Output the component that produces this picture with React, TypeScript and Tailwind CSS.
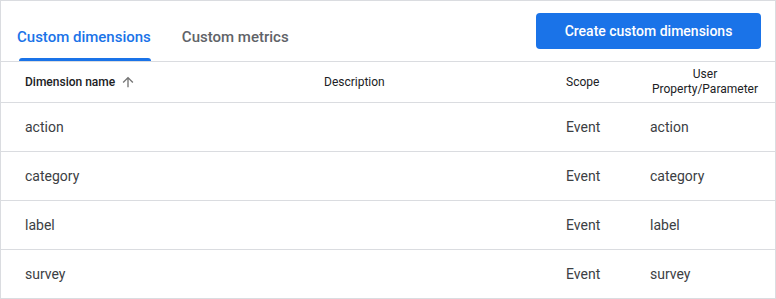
const rows = [
  { name: "action", scope: "Event", param: "action" },
  { name: "category", scope: "Event", param: "category" },
  { name: "label", scope: "Event", param: "label" },
  { name: "survey", scope: "Event", param: "survey" },
];

function SortUp() {
  return (
    <svg viewBox="0 0 24 24" className="w-[16px] h-[16px] fill-[#757575]">
      <path d="M4 12l1.41 1.41L11 7.83V20h2V7.83l5.58 5.59L20 12l-8-8-8 8z" />
    </svg>
  );
}

export default function App() {
  return (
    <div className="w-[776px] h-[299px] bg-white font-['Roboto',sans-serif]">
      <div className="border border-[#dadce0] h-[299px] flex flex-col">
        {/* tabs + action */}
        <div className="shrink-0 flex items-stretch justify-between h-[61px] border-b border-[#dadce0]">
          <div className="flex items-stretch pl-[16px] gap-[31px]">
            <div className="relative flex items-end pb-[13px] text-[15px] text-[#1a73e8] font-medium">
              Custom dimensions
              <div className="absolute left-[2px] right-0 bottom-0 h-[3px] bg-[#1a73e8] rounded-t-[3px]" />
            </div>
            <div className="flex items-end pb-[13px] text-[15px] text-[#5f6368] font-medium">Custom metrics</div>
          </div>
          <div className="flex items-center pr-[14px]">
            <button className="h-[36px] w-[225px] rounded-[4px] bg-[#1a73e8] text-white text-[14px] font-medium">
              Create custom dimensions
            </button>
          </div>
        </div>

        {/* header */}
        <div className="shrink-0 grid grid-cols-[299px_242px_84px_110px] pl-[24px] h-[41px] items-center border-b border-[#dadce0] text-[12px] text-[#202124]">
          <div className="flex items-center gap-[5px] font-medium">
            Dimension name
            <SortUp />
          </div>
          <div>Description</div>
          <div>Scope</div>
          <div className="text-center leading-[15px]">
            User
            <br />
            Property/Parameter
          </div>
        </div>

        {rows.map((r, i) => (
          <div
            key={r.name}
            className={
              i < rows.length - 1
                ? "shrink-0 grid grid-cols-[299px_242px_84px_110px] pl-[24px] h-[49px] items-center border-b border-[#dadce0] text-[14px] text-[#3c4043]"
                : "shrink-0 grid grid-cols-[299px_242px_84px_110px] pl-[24px] h-[48px] items-center text-[14px] text-[#3c4043]"
            }
          >
            <div>{r.name}</div>
            <div></div>
            <div>{r.scope}</div>
            <div>{r.param}</div>
          </div>
        ))}
      </div>
    </div>
  );
}
